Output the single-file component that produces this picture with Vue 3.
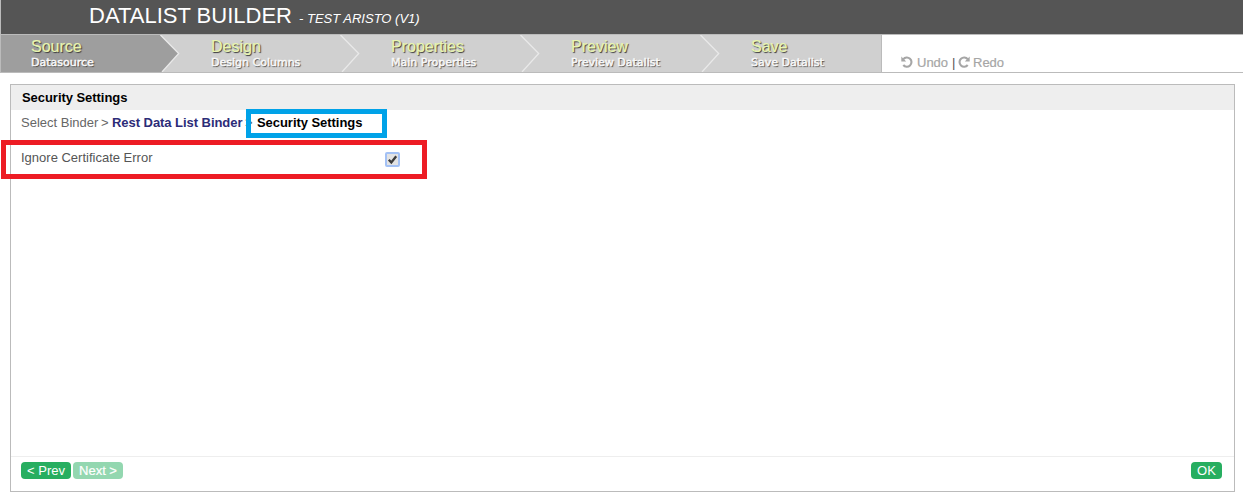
<script setup>
const steps = [
  { title: 'Source', note: 'Datasource', cls: 'source' },
  { title: 'Design', note: 'Design Columns', cls: 'design' },
  { title: 'Properties', note: 'Main Properties', cls: 'properties' },
  { title: 'Preview', note: 'Preview Datalist', cls: 'preview' },
  { title: 'Save', note: 'Save Datalist', cls: 'save' },
]
</script>

<template>
  <div class="builder">
    <header class="top">
      <h1>DATALIST BUILDER</h1>
      <em>- TEST ARISTO (V1)</em>
    </header>

    <nav class="nav">
      <ul class="steps">
        <li v-for="(s, i) in steps" :key="s.title" class="step" :class="[s.cls, { active: i === 0 }]">
          <span class="title">{{ s.title }}</span>
          <span class="note">{{ s.note }}</span>
          <svg v-if="i < 4" class="arrow" width="20" height="37" viewBox="0 0 20 37">
            <path v-if="i === 0" d="M0 0L18.5 18.5L2 37H0Z" fill="#9e9e9e" />
            <path d="M0.5 0L18.7 18.5L2 37" fill="none" stroke="#e9e9e9" stroke-width="1.3" />
          </svg>
        </li>
      </ul>
      <div class="history">
        <svg width="12" height="12" viewBox="0 0 12 12">
          <path d="M2.3 3.2A4.6 4.6 0 1 1 2.3 9" fill="none" stroke="#a6a6a6" stroke-width="2.1" />
          <path d="M0.3 0.6V5.4H5.2Z" fill="#a6a6a6" />
        </svg>
        <span class="undo">Undo</span>
        <span class="bar">|</span>
        <svg width="12" height="12" viewBox="0 0 12 12">
          <path d="M9.7 3.2A4.6 4.6 0 1 0 9.7 9" fill="none" stroke="#a6a6a6" stroke-width="2.1" />
          <path d="M11.7 0.6V5.4H6.8Z" fill="#a6a6a6" />
        </svg>
        <span class="redo">Redo</span>
      </div>
    </nav>

    <main class="panel">
      <h2>Security Settings</h2>
      <div class="crumbs">
        <span class="c1">Select Binder</span>
        <span class="gt">&gt;</span>
        <b class="c2">Rest Data List Binder</b>
        <span class="gt2">&gt;</span>
        <b class="c3">Security Settings</b>
      </div>
      <div class="field">
        <label>Ignore Certificate Error</label>
        <span class="check">
          <svg width="11" height="11" viewBox="0 0 11 11">
            <path d="M1.8 5.8L4.3 8.4L9.2 2.3" fill="none" stroke="#3b3b3b" stroke-width="2.3" />
          </svg>
        </span>
      </div>
      <footer>
        <button class="prev">&lt; Prev</button>
        <button class="next">Next &gt;</button>
        <button class="ok">OK</button>
      </footer>
    </main>

    <div class="mark blue"></div>
    <div class="mark red"></div>
  </div>
</template>

<style>
body { background: #fff; }
</style>

<style scoped>
* { box-sizing: border-box; }
.builder {
  position: relative;
  width: 1243px;
  height: 498px;
  overflow: hidden;
  font-family: "Liberation Sans", Arial, sans-serif;
  font-size: 13px;
  color: #555;
  white-space: nowrap;
}
.top {
  display: flex;
  align-items: baseline;
  height: 34px;
  padding-left: 88px;
  background: #555;
  color: #fff;
  border-left: 1px solid #bbb;
}
h1 { margin: 0; width: 210px; font-size: 22px; font-weight: 400; line-height: 31px; }
.top em { font-size: 13px; }
.nav {
  display: flex;
  height: 39px;
  border: solid #bbb;
  border-width: 1px 0 1px 1px;
}
.steps {
  display: flex;
  width: 881px;
  margin: 0;
  padding: 0;
  list-style: none;
  background: #d0d0d0;
  border-right: 1px solid #bbb;
}
.step {
  position: relative;
  display: flex;
  flex-direction: column;
  width: 180px;
  padding: 2px 0 0 30px;
}
.step.active::before {
  content: "";
  position: absolute;
  inset: 0 21px 0 0;
  background: #9e9e9e;
}
.save { width: 160px; }
.title {
  position: relative;
  font-size: 16px;
  line-height: 19px;
  color: #e9f5b0;
  -webkit-text-stroke: 0.2px #e9f5b0;
  text-shadow: 1px 1px 1px #333;
}
.note {
  position: relative;
  font: 11px/13px "DejaVu Sans", sans-serif;
  color: #f8f8f8;
  -webkit-text-stroke: 0.5px #f8f8f8;
  text-shadow: 1px 1px 1px #333;
}
.arrow { position: absolute; left: 159px; top: 0; z-index: 1; }
.history {
  display: flex;
  align-items: center;
  height: 16px;
  margin: 19px 0 0 19px;
  color: #a6a6a6;
}
.undo { width: 35px; margin-left: 4px; }
.undo, .redo { -webkit-text-stroke: 0.2px #a6a6a6; }
.bar { width: 6px; color: #555; }
.redo { margin-left: 3px; }
.panel {
  display: flex;
  flex-direction: column;
  width: 1225px;
  height: 408px;
  margin: 11px 0 0 10px;
  border: 1px solid #bbb;
}
h2 {
  height: 25px;
  margin: 0;
  padding-left: 11px;
  background: #eee;
  color: #000;
  font-size: 13px;
  line-height: 25px;
  letter-spacing: -0.05px;
}
.crumbs { display: flex; height: 25px; padding-left: 10px; line-height: 25px; }
.crumbs b { letter-spacing: -0.05px; }
.c1 { width: 80px; }
.c1, .gt, .gt2 { color: #666; }
.gt { width: 11px; }
.crumbs .c2 { width: 133px; color: #2c2c78; }
.gt2 { width: 12px; }
.crumbs .c3 { color: #000; }
.field { display: flex; flex: 1; padding: 15px 0 0 10px; }
label { width: 364px; line-height: 16px; }
.check {
  display: grid;
  place-items: center;
  width: 15px;
  height: 15px;
  margin-top: 2px;
  border: 2px solid #a3c1f5;
  border-radius: 2px;
  background: #e3e3e3;
}
footer {
  display: flex;
  height: 35px;
  padding: 5px 12px 0 10px;
  gap: 2px;
  border-top: 1px solid #eee;
}
button {
  height: 17px;
  padding: 0;
  border: 0;
  border-radius: 4px;
  background: #27ae60;
  color: #fff;
  font: 13px/17px "Liberation Sans", Arial, sans-serif;
}
.prev, .next { width: 50px; }
.next { background: #93d7b0; -webkit-text-stroke: 0.2px #fff; }
.ok { width: 31px; margin-left: auto; }
.mark { position: absolute; border: 5px solid; }
.blue { left: 246px; top: 109px; width: 141px; height: 29px; border-color: #00a2e8; }
.red { left: 1px; top: 140px; width: 426px; height: 39px; border-color: #ed1c24; }
</style>
